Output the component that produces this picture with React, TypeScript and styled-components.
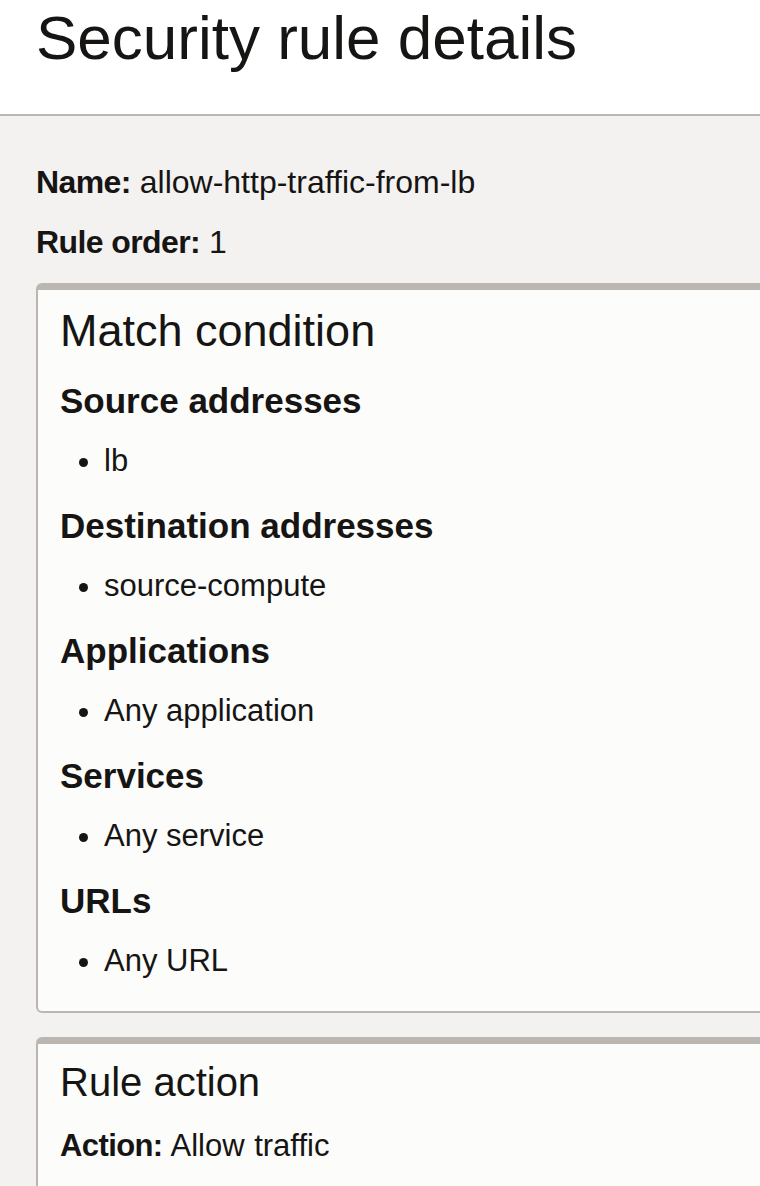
import React from "react";
import styled, { createGlobalStyle } from "styled-components";

const Global = createGlobalStyle`
  html, body {
    margin: 0;
    padding: 0;
    background: #f3f2f1;
    overflow-x: hidden;
  }
  body {
    font-family: "Liberation Sans", Arial, Helvetica, sans-serif;
    color: #161513;
  }
`;

const Page = styled.div`
  width: 760px;
  min-height: 1186px;
  overflow: hidden;
`;

const Header = styled.header`
  background: #ffffff;
  height: 114px;
  border-bottom: 2px solid #bcb6b1;
  padding-left: 36px;
  box-sizing: content-box;
`;

const Title = styled.h1`
  margin: 0;
  font-size: 62px;
  font-weight: 400;
  line-height: 76px;
`;

const Content = styled.main`
  padding: 46px 0 0 36px;
`;

const Field = styled.p`
  margin: 0 0 20px;
  font-size: 32px;
  line-height: 40px;
`;

const Label = styled.strong`
  font-weight: 700;
  letter-spacing: -0.6px;
`;

const Card = styled.section<{ $gap?: number }>`
  width: 800px;
  box-sizing: border-box;
  background: #fcfcfb;
  border: 2px solid #bcb6b1;
  border-top-width: 7px;
  border-radius: 6px;
  padding: 14px 22px 30px;
  margin-top: ${(p) => p.$gap ?? 0}px;
`;

const CardTitle = styled.h2<{ $size: number }>`
  margin: 0;
  font-size: ${(p) => p.$size}px;
  font-weight: 400;
  line-height: ${(p) => (p.$size === 45 ? 54 : 48)}px;
`;

const SubHeading = styled.h3<{ $first?: boolean }>`
  margin: ${(p) => (p.$first ? 22 : 24)}px 0 0;
  font-size: 35px;
  font-weight: 700;
  line-height: 42px;
`;

const List = styled.ul`
  margin: 19px 0 0;
  padding-left: 44px;
  font-size: 31px;
  line-height: 40px;
`;

const Item = styled.li``;

const ActionLine = styled.p`
  margin: 20px 0 0;
  font-size: 31px;
  line-height: 40px;
  word-spacing: 1px;
`;

const sections: { title: string; items: string[] }[] = [
  { title: "Source addresses", items: ["lb"] },
  { title: "Destination addresses", items: ["source-compute"] },
  { title: "Applications", items: ["Any application"] },
  { title: "Services", items: ["Any service"] },
  { title: "URLs", items: ["Any URL"] },
];

export default function App() {
  return (
    <Page>
      <Global />
      <Header>
        <Title>Security rule details</Title>
      </Header>
      <Content>
        <Field>
          <Label>Name:</Label> allow-http-traffic-from-lb
        </Field>
        <Field>
          <Label>Rule order:</Label> 1
        </Field>
        <Card $gap={21}>
          <CardTitle $size={45}>Match condition</CardTitle>
          {sections.map((s, i) => (
            <React.Fragment key={s.title}>
              <SubHeading $first={i === 0}>{s.title}</SubHeading>
              <List>
                {s.items.map((it) => (
                  <Item key={it}>{it}</Item>
                ))}
              </List>
            </React.Fragment>
          ))}
        </Card>
        <Card $gap={24}>
          <CardTitle $size={40}>Rule action</CardTitle>
          <ActionLine>
            <Label>Action:</Label> Allow traffic
          </ActionLine>
        </Card>
      </Content>
    </Page>
  );
}
